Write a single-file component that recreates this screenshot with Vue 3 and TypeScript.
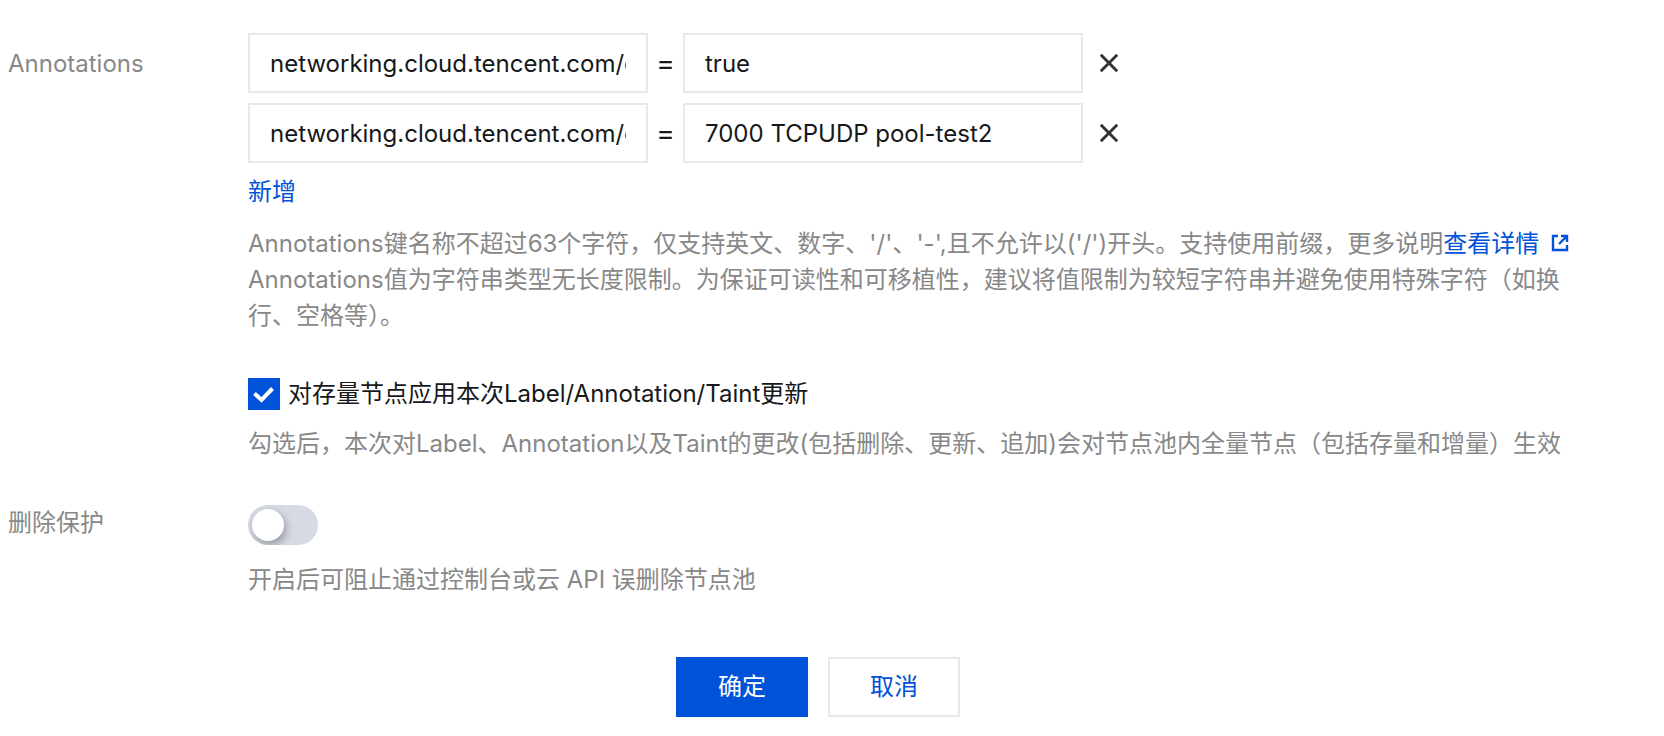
<script setup lang="ts">
import { ref } from 'vue'

interface Annotation {
  id: number
  key: string
  value: string
}

const annotations = ref<Annotation[]>([
  { id: 1, key: 'networking.cloud.tencent.com/enable-clb-hostport', value: 'true' },
  { id: 2, key: 'networking.cloud.tencent.com/clb-hostport-mapping', value: '7000 TCPUDP pool-test2' },
])
const applyToExisting = ref(true)
const deleteProtection = ref(false)
let nextId = 3

function addRow(): void {
  annotations.value.push({ id: nextId++, key: '', value: '' })
}

function removeRow(id: number): void {
  annotations.value = annotations.value.filter((row) => row.id !== id)
}
</script>

<template>
  <form class="form" @submit.prevent>
    <div class="item">
      <div class="label label-input">Annotations</div>
      <div class="control">
        <div class="rows">
          <div v-for="row in annotations" :key="row.id" class="row">
            <input v-model="row.key" class="text-input" type="text" aria-label="Annotation key" spellcheck="false" />
            <span class="equals">=</span>
            <input v-model="row.value" class="text-input" type="text" aria-label="Annotation value" spellcheck="false" />
            <button class="remove" type="button" aria-label="删除" @click="removeRow(row.id)">
              <svg viewBox="0 0 18 18" width="18" height="18" aria-hidden="true">
                <path d="M1.8 1.8 16.2 16.2M16.2 1.8 1.8 16.2" fill="none" stroke="#333" stroke-width="2.9" stroke-linecap="square" />
              </svg>
            </button>
          </div>
        </div>
        <button class="add" type="button" @click="addRow">新增</button>
        <p class="help">
          Annotations键名称不超过63个字符，仅支持英文、数字、'/'、'-',且不允许以('/')开头。支持使用前缀，更多说明<a class="link" href="#">查看详情<svg class="external" viewBox="0 0 18 18" width="18" height="18" aria-hidden="true">
              <path d="M7 2H2v14h14v-5M10 2h6v6M16 2 8 10" fill="none" stroke="currentColor" stroke-width="2.4" />
            </svg></a><br />Annotations值为字符串类型无长度限制。为保证可读性和可移植性，建议将值限制为较短字符串并避免使用特殊字符（如换行、空格等）。
        </p>
        <label class="check">
          <span class="box-wrap">
            <input v-model="applyToExisting" class="box" type="checkbox" />
            <svg v-if="applyToExisting" class="tick" viewBox="0 0 32 32" width="32" height="32" aria-hidden="true">
              <path d="M6.5 15.5 13.5 22 24.5 10.5" fill="none" stroke="#fff" stroke-width="4" />
            </svg>
          </span>
          <span>对存量节点应用本次Label/Annotation/Taint更新</span>
        </label>
        <p class="help check-help">勾选后，本次对Label、Annotation以及Taint的更改(包括删除、更新、追加)会对节点池内全量节点（包括存量和增量）生效</p>
      </div>
    </div>

    <div class="item protection">
      <label class="label" for="protect">删除保护</label>
      <div class="control">
        <input id="protect" v-model="deleteProtection" class="switch" type="checkbox" role="switch" />
        <p class="help switch-help">开启后可阻止通过控制台或云 API 误删除节点池</p>
      </div>
    </div>

    <div class="actions">
      <button class="btn primary" type="submit">确定</button>
      <button class="btn" type="button">取消</button>
    </div>
  </form>
</template>

<style>
body {
  margin: 0;
  background: #fff;
}
</style>

<style scoped>
.form,
.form input,
.form button {
  font-family: Inter, "Noto Sans CJK SC", sans-serif;
  font-size: 24px;
  line-height: 36px;
}
.form {
  box-sizing: border-box;
  padding: 33px 36px 16px 8px;
  color: #16181a;
}
.form * {
  box-sizing: border-box;
}
.item {
  display: grid;
  grid-template-columns: 240px minmax(0, 1fr);
}
.label {
  color: #888;
}
.label-input {
  padding-top: 13px;
}
.control {
  padding-right: 48px;
}
.rows {
  display: flex;
  flex-direction: column;
  gap: 10px;
}
.row {
  display: flex;
  align-items: center;
}
.text-input {
  width: 400px;
  height: 60px;
  padding: 0 20px;
  border: 2px solid #e5e8ed;
  border-radius: 0;
  background: #fff;
  color: #16181a;
  outline: none;
}
.text-input:focus {
  border-color: #0052d9;
}
.equals {
  width: 35px;
  font-size: 28px;
  text-align: center;
}
.remove {
  display: flex;
  margin-left: 8px;
  padding: 9px;
  border: 0;
  background: none;
  cursor: pointer;
}
.add {
  display: block;
  margin-top: 11px;
  padding: 0;
  border: 0;
  background: none;
  color: #0052d9;
  cursor: pointer;
}
.help {
  margin: 16px 0 0;
  color: #888;
}
.link {
  color: #0052d9;
  text-decoration: none;
}
.external {
  margin-left: 12px;
}
.check {
  display: flex;
  align-items: center;
  width: fit-content;
  margin-top: 42px;
  gap: 8px;
}
.box-wrap {
  position: relative;
  display: flex;
}
.box {
  appearance: none;
  width: 32px;
  height: 32px;
  margin: 0;
  border: 2px solid #cfd5de;
}
.box:checked {
  border-color: #0052d9;
  background: #0052d9;
}
.tick {
  position: absolute;
  inset: 0;
  pointer-events: none;
}
.check-help {
  margin-top: 14px;
}
.protection {
  margin-top: 43px;
}
.switch {
  appearance: none;
  display: block;
  width: 70px;
  height: 40px;
  margin: 0;
  padding: 4px;
  border-radius: 20px;
  background: #d5dae3;
  overflow: hidden;
  cursor: pointer;
}
.switch::before {
  content: "";
  display: block;
  width: 32px;
  height: 32px;
  border-radius: 50%;
  background: #fff;
  box-shadow: 2px 4px 8px rgba(0, 0, 0, 0.3);
}
.switch:checked {
  background: #0052d9;
}
.switch:checked::before {
  margin-left: 30px;
}
.switch-help {
  margin-top: 17px;
}
.actions {
  display: flex;
  justify-content: center;
  margin-top: 59px;
  gap: 20px;
}
.btn {
  width: 132px;
  height: 60px;
  padding: 0;
  border: 2px solid #e5e8ed;
  background: #fff;
  color: #0052d9;
  cursor: pointer;
}
.btn.primary {
  border-color: #0052d9;
  background: #0052d9;
  color: #fff;
}
</style>
